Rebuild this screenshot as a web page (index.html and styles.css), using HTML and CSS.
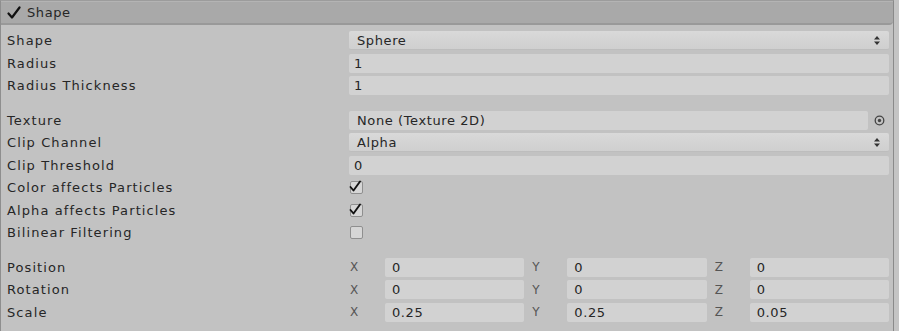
FILE: index.html
```html
<!DOCTYPE html>
<html lang="en">
<head>
    <meta charset="UTF-8">
    <meta name="viewport" content="width=device-width, initial-scale=1.0">
    <title>Shape module</title>
    <link rel="stylesheet" href="styles.css">
</head>
<body>
    <div class="inspector">
        <div class="module-header">
            <svg class="header-check" width="14" height="14" viewBox="0 0 14 14">
                <path d="M1.5 7.5 L5 11.5 L12.5 1.5" fill="none" stroke="#111" stroke-width="2.2" stroke-linejoin="round" stroke-linecap="round"/>
            </svg>
            <span class="header-title">Shape</span>
        </div>

        <div class="module-body">
            <div class="row">
                <div class="label">Shape</div>
                <div class="popup">
                    <span>Sphere</span>
                    <svg class="arrows" width="6" height="9" viewBox="0 0 6 9"><path d="M3 0 L6 3.5 H0 Z M3 9 L6 5.5 H0 Z" fill="#333"/></svg>
                </div>
            </div>
            <div class="row">
                <div class="label">Radius</div>
                <div class="field">1</div>
            </div>
            <div class="row">
                <div class="label">Radius Thickness</div>
                <div class="field">1</div>
            </div>

            <div class="spacer"></div>

            <div class="row">
                <div class="label">Texture</div>
                <div class="object-field">
                    <div class="field">None (Texture 2D)</div>
                    <svg class="picker" width="11" height="11" viewBox="0 0 11 11"><circle cx="5.5" cy="5.5" r="4.3" fill="none" stroke="#444" stroke-width="1.3"/><circle cx="5.5" cy="5.5" r="1.7" fill="#444"/></svg>
                </div>
            </div>
            <div class="row">
                <div class="label">Clip Channel</div>
                <div class="popup">
                    <span>Alpha</span>
                    <svg class="arrows" width="6" height="9" viewBox="0 0 6 9"><path d="M3 0 L6 3.5 H0 Z M3 9 L6 5.5 H0 Z" fill="#333"/></svg>
                </div>
            </div>
            <div class="row">
                <div class="label">Clip Threshold</div>
                <div class="field">0</div>
            </div>
            <div class="row">
                <div class="label">Color affects Particles</div>
                <div class="checkbox checked">
                    <svg width="14" height="13" viewBox="0 0 14 13"><path d="M1.5 7 L4.5 10.5 L11 1.5" fill="none" stroke="#111" stroke-width="1.9" stroke-linejoin="round" stroke-linecap="round"/></svg>
                </div>
            </div>
            <div class="row">
                <div class="label">Alpha affects Particles</div>
                <div class="checkbox checked">
                    <svg width="14" height="13" viewBox="0 0 14 13"><path d="M1.5 7 L4.5 10.5 L11 1.5" fill="none" stroke="#111" stroke-width="1.9" stroke-linejoin="round" stroke-linecap="round"/></svg>
                </div>
            </div>
            <div class="row">
                <div class="label">Bilinear Filtering</div>
                <div class="checkbox"></div>
            </div>

            <div class="spacer"></div>

            <div class="row">
                <div class="label">Position</div>
                <div class="vector">
                    <div class="axis"><span class="axis-name">X</span><div class="field">0</div></div>
                    <div class="axis"><span class="axis-name">Y</span><div class="field">0</div></div>
                    <div class="axis"><span class="axis-name">Z</span><div class="field">0</div></div>
                </div>
            </div>
            <div class="row">
                <div class="label">Rotation</div>
                <div class="vector">
                    <div class="axis"><span class="axis-name">X</span><div class="field">0</div></div>
                    <div class="axis"><span class="axis-name">Y</span><div class="field">0</div></div>
                    <div class="axis"><span class="axis-name">Z</span><div class="field">0</div></div>
                </div>
            </div>
            <div class="row">
                <div class="label">Scale</div>
                <div class="vector">
                    <div class="axis"><span class="axis-name">X</span><div class="field">0.25</div></div>
                    <div class="axis"><span class="axis-name">Y</span><div class="field">0.25</div></div>
                    <div class="axis"><span class="axis-name">Z</span><div class="field">0.05</div></div>
                </div>
            </div>
        </div>
    </div>
</body>
</html>
```

FILE: styles.css
```css
body {
    margin: 0;
    padding: 0;
    background-color: #c4c4c4;
    font-family: "DejaVu Sans", Verdana, sans-serif;
    font-size: 13px;
    letter-spacing: 1.1px;
    color: #262626;
}

.inspector {
    width: 894px;
    height: 331px;
    border-left: 1px solid #8e8e8e;
    border-right: 1px solid #8a8a8a;
    border-top: 1px solid #9c9c9c;
    background-color: #c2c2c2;
    box-sizing: border-box;
}

.module-header {
    display: flex;
    align-items: center;
    gap: 6px;
    height: 24px;
    padding-left: 6px;
    background-color: #a9a9a9;
    border-top: 1px solid #b4b4b4;
    border-bottom: 2px solid #999;
    border-radius: 0 0 4px 0;
    box-sizing: border-box;
}

.header-check {
    flex-shrink: 0;
}

.header-title {
    letter-spacing: 0.6px;
}

.module-body {
    padding: 4.5px 4px 0 6px;
}

.row {
    display: grid;
    grid-template-columns: 342px 1fr;
    align-items: center;
    height: 22.5px;
}

.spacer {
    height: 12px;
}

.label {
    white-space: nowrap;
}

.field,
.popup {
    height: 19px;
    line-height: 19px;
    background-color: #d2d2d2;
    border-radius: 2px;
    padding-left: 5px;
    box-sizing: border-box;
    white-space: nowrap;
    letter-spacing: 0.6px;
}

.popup {
    display: flex;
    justify-content: space-between;
    align-items: center;
    padding: 0 8px 0 8px;
    background: linear-gradient(#d9d9d9, #cfcfcf);
    border-bottom: 1px solid #bdbdbd;
}

.arrows {
    margin-right: 1px;
}

.object-field {
    display: flex;
    align-items: center;
    gap: 6px;
}

.object-field .field {
    flex: 1;
    padding-left: 8px;
}

.picker {
    margin-right: 4px;
}

.checkbox {
    position: relative;
    width: 13px;
    height: 13px;
    margin-left: 1px;
    background-color: #d6d6d6;
    border: 1px solid #8f8f8f;
    border-radius: 2px;
    box-sizing: border-box;
}

.checkbox svg {
    position: absolute;
    left: -2px;
    top: -2px;
}

.vector {
    display: grid;
    grid-template-columns: 1fr 1fr 1fr;
    gap: 7px;
}

.axis {
    display: grid;
    grid-template-columns: 36px 1fr;
    align-items: center;
}

.axis-name {
    color: #555;
    font-size: 12px;
    padding-left: 1px;
}

.vector .field {
    padding-left: 7px;
}
```
